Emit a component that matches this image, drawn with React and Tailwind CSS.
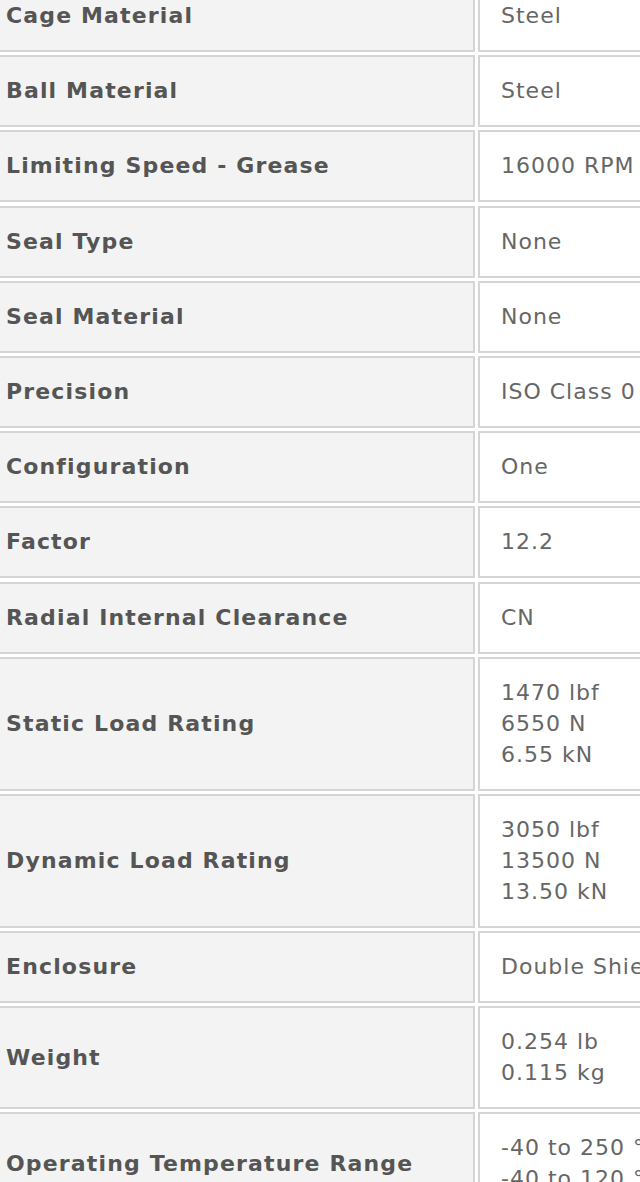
import React from "react";

const specs = [
  { label: "Cage Material", values: ["Steel"] },
  { label: "Ball Material", values: ["Steel"] },
  { label: "Limiting Speed - Grease", values: ["16000 RPM"] },
  { label: "Seal Type", values: ["None"] },
  { label: "Seal Material", values: ["None"] },
  { label: "Precision", values: ["ISO Class 0"] },
  { label: "Configuration", values: ["One"] },
  { label: "Factor", values: ["12.2"] },
  { label: "Radial Internal Clearance", values: ["CN"] },
  { label: "Static Load Rating", values: ["1470 lbf", "6550 N", "6.55 kN"] },
  { label: "Dynamic Load Rating", values: ["3050 lbf", "13500 N", "13.50 kN"] },
  { label: "Enclosure", values: ["Double Shielded"] },
  { label: "Weight", values: ["0.254 lb", "0.115 kg"] },
  { label: "Operating Temperature Range", values: ["-40 to 250 °F", "-40 to 120 °C"] },
];

const SpecRow = ({ label, values }) => (
  <div className="flex gap-[3px]">
    {/* label cell */}
    <div className="w-[489px] shrink-0 flex items-center bg-[#f3f3f3] border-2 border-[#d5d5d5] pl-[18px] pr-4 pt-[18px] pb-[19px]">
      <span className="font-bold text-[#555555] text-[22px] tracking-[1.15px] leading-[31px]">{label}</span>
    </div>
    {/* value cell */}
    <div className="w-[320px] shrink-0 flex flex-col justify-center bg-white border-2 border-[#d5d5d5] pl-[21px] pt-[18px] pb-[19px]">
      {values.map((v) => (
        <span key={v} className="text-[#666666] text-[22px] tracking-[1px] leading-[31px] whitespace-nowrap">
          {v}
        </span>
      ))}
    </div>
  </div>
);

const App = () => {
  return (
    <div className="w-[640px] h-[1182px] overflow-hidden bg-white" style={{ fontFamily: '"DejaVu Sans", Verdana, sans-serif' }}>
      <div className="flex flex-col gap-[3.2px] -mt-[20px] -ml-[14px]">
        {specs.map((s) => (
          <SpecRow key={s.label} {...s} />
        ))}
      </div>
    </div>
  );
};

export default App;
